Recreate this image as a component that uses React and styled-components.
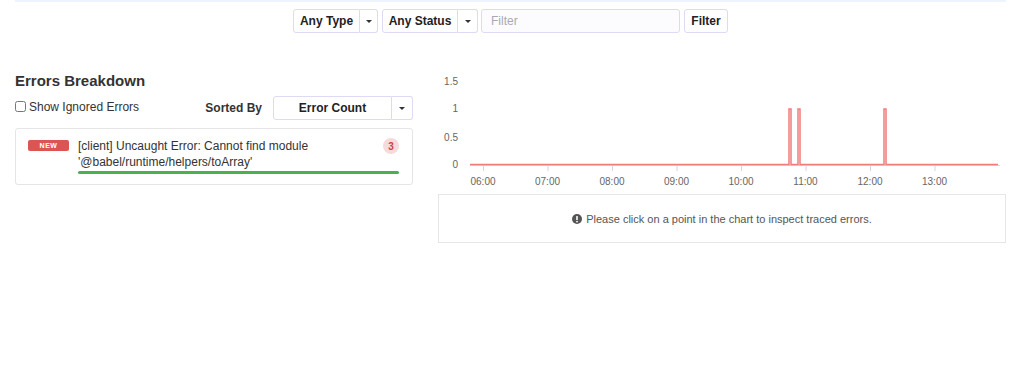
import React from 'react';
import styled, { createGlobalStyle } from 'styled-components';

const GlobalStyle = createGlobalStyle`
   body {
      margin: 0;
      background: #fff;
      font-family: "Liberation Sans", Arial, sans-serif;
      color: #333;
   }
`

const Page = styled.div`
   width: 1024px;
   height: 380px;
   padding: 0 18px 0 15px;
   box-sizing: border-box;
`

const TopStrip = styled.div`
   height: 2px;
   background: #edf4fd;
`

const Toolbar = styled.div`
   display: flex;
   justify-content: center;
   gap: 4px;
   margin: 7px 0 0 0;
`

const Group = styled.div`
   display: flex;
`

const Btn = styled.button`
   height: 24px;
   box-sizing: border-box;
   padding: 0;
   white-space: nowrap;
   width: ${p => (p.$w ? p.$w + 'px' : 'auto')};
   background: #fff;
   border: 1px solid #dcdaf4;
   border-left-width: ${p => (p.$caret ? '0' : '1px')};
   border-radius: ${p => (p.$caret ? '0 3px 3px 0' : p.$group ? '3px 0 0 3px' : '3px')};
   font-family: inherit;
   font-size: 12px;
   font-weight: bold;
   color: #222;
   display: flex;
   align-items: center;
   justify-content: center;
`

const Caret = styled.span`
   width: 0;
   height: 0;
   border-left: 3px solid transparent;
   border-right: 3px solid transparent;
   border-top: 3px solid #333;
`

const FilterInput = styled.input`
   width: 199px;
   height: 24px;
   box-sizing: border-box;
   border: 1px solid #dcdaf4;
   border-radius: 3px;
   background: #fcfcff;
   padding: 0 9px;
   font-family: inherit;
   font-size: 12px;
   margin-left: -1px;
   &::placeholder { color: #a9a9b3; }
`

const Main = styled.div`
   display: flex;
   gap: 25px;
   margin-top: 38px;
`

const Left = styled.div`
   width: 398px;
`

const Heading = styled.h2`
   margin: 0;
   font-size: 15px;
   line-height: 20px;
   font-weight: bold;
   color: #333;
`

const Controls = styled.div`
   display: flex;
   align-items: center;
   margin-top: 5px;
`

const CheckLabel = styled.label`
   display: flex;
   align-items: center;
   font-size: 12px;
   color: #333;
   margin-top: -3px;
   flex: 1;
   input { margin: 0 3px 0 0; width: 11px; height: 11px; }
`

const SortLabel = styled.span`
   font-size: 12px;
   font-weight: bold;
   color: #333;
   margin-right: 11px;
`

const Card = styled.div`
   display: flex;
   align-items: flex-start;
   margin-top: 8px;
   padding: 9px 13px 10px 12px;
   border: 1px solid #e5e5e5;
   border-radius: 3px;
`

const NewBadge = styled.span`
   width: 41px;
   height: 11px;
   margin-top: 2px;
   margin-right: 9px;
   background: #dc5454;
   border-radius: 2px;
   color: #fff;
   font-size: 7px;
   font-weight: bold;
   letter-spacing: 0.5px;
   display: flex;
   align-items: center;
   justify-content: center;
   flex-shrink: 0;
`

const CardBody = styled.div`
   flex: 1;
`

const TitleRow = styled.div`
   display: flex;
   justify-content: space-between;
`

const Title = styled.div`
   font-size: 12px;
   line-height: 16px;
   color: #333;
`

const Count = styled.span`
   width: 16px;
   height: 16px;
   border-radius: 50%;
   background: #f7dada;
   color: #c44;
   font-size: 10px;
   font-weight: bold;
   display: flex;
   align-items: center;
   justify-content: center;
`

const ProgressBar = styled.div`
   height: 3px;
   margin-top: 1px;
   border-radius: 2px;
   background: #4caf50;
   width: ${p => p.$pct}%;
`

const Right = styled.div`
   width: 568px;
`

const ChartSvg = styled.svg`
   display: block;
   margin-top: 2px;
   font-family: "Liberation Sans", Arial, sans-serif;
`

const InfoBox = styled.div`
   margin-top: 5px;
   height: 49px;
   box-sizing: border-box;
   border: 1px solid #e6e6e6;
   display: flex;
   align-items: center;
   justify-content: center;
   gap: 4px;
   font-size: 11px;
   color: #555;
`

const hours = ['06:00', '07:00', '08:00', '09:00', '10:00', '11:00', '12:00', '13:00']
const spikes = [352, 361, 447]

const Chart = () => (
   <ChartSvg width="568" height="116">
      {[['1.5', 12], ['1', 39], ['0.5', 68], ['0', 95]].map(([t, y]) => (
         <text key={t} x="20" y={y} textAnchor="end" fontSize="10" fill="#666">{t}</text>
      ))}
      <line x1="32" y1="92.5" x2="562" y2="92.5" stroke="#ccd6eb" />
      {hours.map((h, i) => {
         const x = 45 + i * 64.5
         return (
            <g key={h}>
               <line x1={x + 0.5} y1="93" x2={x + 0.5} y2="98" stroke="#ccd6eb" />
               <text x={x} y="112" textAnchor="middle" fontSize="10" fill="#666">{h}</text>
            </g>
         )
      })}
      <polyline
         fill="none"
         stroke="#f07c7c"
         strokeWidth="1.5"
         points={`32,91.5 ${spikes.map(x => `${x - 1},91.5 ${x - 1},36 ${x + 1},36 ${x + 1},91.5`).join(' ')} 560,91.5`}
      />
   </ChartSvg>
)

const InfoIcon = () => (
   <svg width="10" height="10" viewBox="0 0 10 10">
      <circle cx="5" cy="5" r="5" fill="#555" />
      <rect x="4.2" y="2" width="1.6" height="4" rx="0.5" fill="#fff" />
      <circle cx="5" cy="7.6" r="0.9" fill="#fff" />
   </svg>
)

const App = () => (
   <Page>
      <GlobalStyle />
      <TopStrip />
      <Toolbar>
         <Group>
            <Btn $group $w={67}>Any Type</Btn>
            <Btn $caret $w={18}><Caret /></Btn>
         </Group>
         <Group>
            <Btn $group $w={76}>Any Status</Btn>
            <Btn $caret $w={20}><Caret /></Btn>
         </Group>
         <FilterInput placeholder="Filter" />
         <Btn $w={44}>Filter</Btn>
      </Toolbar>
      <Main>
         <Left>
            <Heading>Errors Breakdown</Heading>
            <Controls>
               <CheckLabel>
                  <input type="checkbox" />
                  Show Ignored Errors
               </CheckLabel>
               <SortLabel>Sorted By</SortLabel>
               <Group>
                  <Btn $group $w={119}>Error Count</Btn>
                  <Btn $caret $w={21}><Caret /></Btn>
               </Group>
            </Controls>
            <Card>
               <NewBadge>NEW</NewBadge>
               <CardBody>
                  <TitleRow>
                     <Title>
                        [client] Uncaught Error: Cannot find module<br />
                        '@babel/runtime/helpers/toArray'
                     </Title>
                     <Count>3</Count>
                  </TitleRow>
                  <ProgressBar $pct={100} />
               </CardBody>
            </Card>
         </Left>
         <Right>
            <Chart />
            <InfoBox>
               <InfoIcon />
               Please click on a point in the chart to inspect traced errors.
            </InfoBox>
         </Right>
      </Main>
   </Page>
)

export default App;
